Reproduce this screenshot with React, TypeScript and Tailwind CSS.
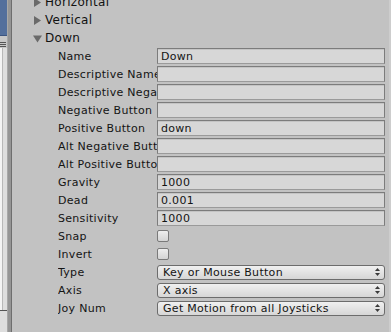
const font = { fontFamily: '"DejaVu Sans", Verdana, sans-serif' };

const fields: { label: string; kind: "text" | "check" | "select"; value?: string }[] = [
  { label: "Name", kind: "text", value: "Down" },
  { label: "Descriptive Name", kind: "text", value: "" },
  { label: "Descriptive Negative Name", kind: "text", value: "" },
  { label: "Negative Button", kind: "text", value: "" },
  { label: "Positive Button", kind: "text", value: "down" },
  { label: "Alt Negative Button", kind: "text", value: "" },
  { label: "Alt Positive Button", kind: "text", value: "" },
  { label: "Gravity", kind: "text", value: "1000" },
  { label: "Dead", kind: "text", value: "0.001" },
  { label: "Sensitivity", kind: "text", value: "1000" },
  { label: "Snap", kind: "check" },
  { label: "Invert", kind: "check" },
  { label: "Type", kind: "select", value: "Key or Mouse Button" },
  { label: "Axis", kind: "select", value: "X axis" },
  { label: "Joy Num", kind: "select", value: "Get Motion from all Joysticks" },
];

function Arrows() {
  return (
    <svg width="5" height="8" viewBox="0 0 5 8" className="mr-[4px] shrink-0">
      <path d="M2.5 0 L5 3 L0 3 Z" fill="#3a3a3a" />
      <path d="M0 5 L5 5 L2.5 8 Z" fill="#3a3a3a" />
    </svg>
  );
}

function Foldout({ label, open }: { label: string; open?: boolean }) {
  return (
    <div className="h-[18px] flex items-center pl-[21px]">
      <svg width="9" height="9" viewBox="0 0 9 9" className="mr-[3px] shrink-0">
        {open ? (
          <path d="M0 1.5 L9 1.5 L4.5 8.5 Z" fill="#6a6a6a" />
        ) : (
          <path d="M1 0 L8 4.5 L1 9 Z" fill="#6a6a6a" />
        )}
      </svg>
      <span className="text-[12px] text-[#111]">{label}</span>
    </div>
  );
}

export default function App() {
  return (
    <div
      className="w-[391px] h-[332px] overflow-hidden flex bg-[#c2c2c2] text-[11px] leading-none tracking-[0.3px]"
      style={font}
    >
      {/* left hierarchy sliver */}
      <div className="w-[7px] flex flex-col shrink-0">
        <div className="h-[36px] bg-[#536f9c] border-b border-[#3c5580]" />
        <div className="h-[12px] bg-[#c8c8c8] flex flex-col justify-end gap-[1px] pb-[1px]">
          <div className="h-[1px] w-[6px] bg-[#555]" />
          <div className="h-[1px] w-[6px] bg-[#555]" />
          <div className="h-[1px] w-[6px] bg-[#555]" />
        </div>
        <div className="flex-1 bg-[#dedede] flex flex-col">
          <div className="h-[262px] flex">
            <div className="w-[2px] bg-[#f4f4f4]" />
            <div className="w-[1px] bg-[#b8b8b8]" />
            <div className="flex-1" />
          </div>
          <div className="h-[1px] bg-[#555]" />
        </div>
      </div>
      <div className="w-[1px] bg-[#a8a8a8] shrink-0" />
      <div className="w-[3px] bg-[#959595] shrink-0" />
      <div className="w-[1px] bg-[#6e6e6e] shrink-0" />

      {/* inspector */}
      <div className="flex-1 flex flex-col mt-[-7px] text-[#141414]">
        <Foldout label="Horizontal" />
        <Foldout label="Vertical" />
        <Foldout label="Down" open />
        {fields.map((f) => (
          <div key={f.label} className="h-[18px] flex items-center pl-[46px] pr-[4px]">
            <div className="w-[99px] shrink-0 overflow-hidden whitespace-nowrap">{f.label}</div>
            {f.kind === "text" && (
              <div className="flex-1 h-[16px] flex items-center pl-[3px] bg-[#d7d7d7] border border-[#7c7c7c] border-b-[#9a9a9a] shadow-[inset_0_1px_0_#c4c4c4]">
                {f.value}
              </div>
            )}
            {f.kind === "check" && (
              <div className="w-[12px] h-[12px] rounded-[2px] border border-[#7a7a7a] bg-gradient-to-b from-[#eeeeee] to-[#d4d4d4]" />
            )}
            {f.kind === "select" && (
              <div className="flex-1 h-[15px] flex items-center justify-between pl-[5px] rounded-[3px] border border-[#6c6c6c] bg-gradient-to-b from-[#f0f0f0] to-[#d6d6d6]">
                <span>{f.value}</span>
                <Arrows />
              </div>
            )}
          </div>
        ))}
      </div>
      <div className="w-[2px] bg-[#cdcdcd] shrink-0" />
    </div>
  );
}
